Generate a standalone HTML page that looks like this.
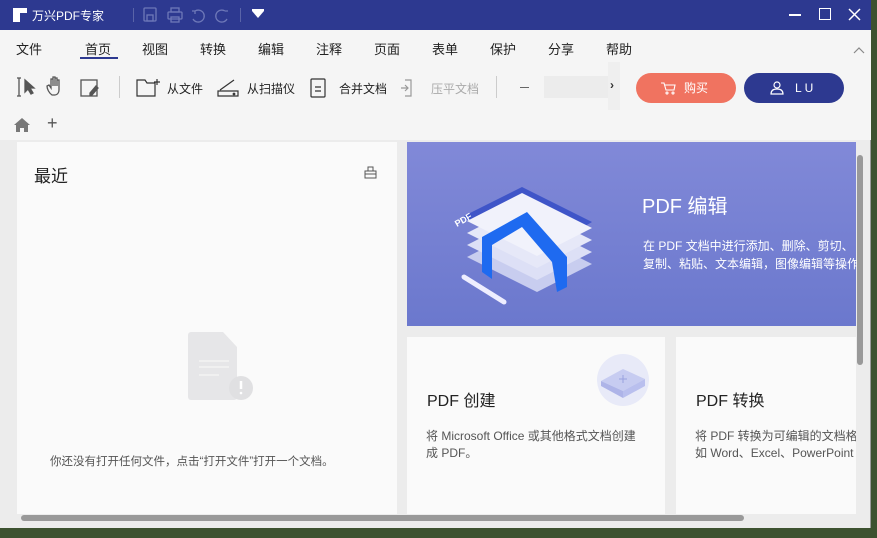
<!DOCTYPE html>
<html><head><meta charset="utf-8"><style>
*{margin:0;padding:0;box-sizing:border-box}
body{width:877px;height:538px;overflow:hidden;background:#3d5230;font-family:"Liberation Sans","Noto Sans CJK SC",sans-serif;position:relative}
.win{position:absolute;left:0;top:0;width:871px;height:528px;background:#ececec;border-right:1px solid #999}
.title{position:absolute;left:0;top:0;width:871px;height:30px;background:#2d3990;color:#fff}
.menu{position:absolute;top:30px;left:0;width:871px;height:32px;background:#f5f5f5}
.menu span{position:absolute;top:9px;font-size:13px;color:#222}
.tb{position:absolute;top:62px;left:0;width:871px;height:48px;background:#f5f5f5}
.tb .t{position:absolute;top:18px;font-size:12px;color:#222}
.tabs{position:absolute;top:110px;left:0;width:871px;height:30px;background:#f5f5f5}
.card{position:absolute;background:#fafafa}
.abs{position:absolute}
</style></head><body>
<div class="win">
<div class="title">
 <div class="abs" style="left:13px;top:8px;width:14px;height:5px;background:#fff"></div>
 <div class="abs" style="left:13px;top:13px;width:7px;height:9px;background:#fff"></div>
 <div class="abs" style="left:32px;top:7px;font-size:12px">万兴PDF专家</div>
 <div class="abs" style="left:133px;top:8px;width:1px;height:14px;background:#5a64a8"></div>
 <svg class="abs" style="left:142px;top:6px" width="100" height="18" fill="none" stroke="#6e78b8" stroke-width="1.3">
  <rect x="2" y="2" width="12" height="13" rx="1"/><rect x="5" y="9" width="6" height="6"/>
  <rect x="26" y="6" width="14" height="7" rx="1"/><rect x="29" y="2" width="8" height="4"/><rect x="29" y="11" width="8" height="5"/>
  <path d="M53 5a6 6 0 1 1 -2 8M53 5l-3 0M53 5l0 3"/>
  <path d="M83 5a6 6 0 1 0 2 8M83 5l3 0"/>
 </svg>
 <div class="abs" style="left:240px;top:8px;width:1px;height:14px;background:#5a64a8"></div>
 <div class="abs" style="left:252px;top:11px;width:0;height:0;border-left:6px solid transparent;border-right:6px solid transparent;border-top:7px solid #fff"></div>
 <div class="abs" style="left:252px;top:9px;width:12px;height:1.5px;background:#fff"></div>
 <div class="abs" style="left:789px;top:14px;width:12px;height:1.5px;background:#fff"></div>
 <div class="abs" style="left:819px;top:8px;width:12px;height:12px;border:1.5px solid #fff"></div>
 <svg class="abs" style="left:848px;top:8px" width="13" height="13" stroke="#fff" stroke-width="1.5"><path d="M1 1L12 12M12 1L1 12"/></svg>
</div>
<div class="menu">
 <span style="left:16px">文件</span><span style="left:85px">首页</span><span style="left:142px">视图</span><span style="left:200px">转换</span><span style="left:258px">编辑</span><span style="left:316px">注释</span><span style="left:374px">页面</span><span style="left:432px">表单</span><span style="left:490px">保护</span><span style="left:548px">分享</span><span style="left:606px">帮助</span>
 <div class="abs" style="left:80px;top:27px;width:38px;height:2px;background:#2d3990"></div>
 <svg class="abs" style="left:853px;top:17px" width="12" height="8" fill="none" stroke="#888" stroke-width="1.2"><path d="M1 6L6 1L11 6"/></svg>
</div>
<div class="tb">
 <svg class="abs" style="left:15px;top:13px" width="110" height="24" fill="none" stroke="#555" stroke-width="1.3">
  <path d="M2 3h4M4 3v18M2 21h4"/><path d="M10 5l0 12 3-3 3 5 2-1-3-5h4z" fill="#555"/>
  <path d="M37 20c-3-2-5-6-5-9l2-1 2 3V4l2 0v7V2h2v9V3h2v8V5h2v10c0 3-2 5-4 5z"/>
  <rect x="66" y="5" width="16" height="16"/><path d="M75 18l6-7 2 2-6 7h-2z" fill="#555"/>
 </svg>
 <div class="abs" style="left:119px;top:14px;width:1px;height:22px;background:#ccc"></div>
 <svg class="abs" style="left:135px;top:14px" width="330" height="24" fill="none" stroke="#333" stroke-width="1.2">
  <path d="M2 4h8l2 3h8v13H2z"/><path d="M22 3v6M19 6h6"/>
  <path d="M83 20h20v-5H83zM85 14l14-10" /><circle cx="99" cy="18" r="0.8"/>
  <rect x="176" y="3" width="14" height="18" rx="1"/><path d="M180 11h6M180 15h6"/>
  <path d="M270 4h6v16h-6" stroke="#999"/><path d="M266 12h7M270 9l3 3-3 3" stroke="#999"/>
 </svg>
 <span class="t" style="left:167px">从文件</span><span class="t" style="left:247px">从扫描仪</span><span class="t" style="left:339px">合并文档</span><span class="t" style="left:431px;color:#aaa">压平文档</span>
 <div class="abs" style="left:496px;top:14px;width:1px;height:22px;background:#ccc"></div>
 <div class="abs" style="left:520px;top:25px;width:9px;height:1px;background:#666"></div>
 <div class="abs" style="left:544px;top:14px;width:65px;height:22px;background:#ececec"></div>
 <div class="abs" style="left:608px;top:0;width:12px;height:48px;background:#efefef"></div>
 <div class="abs" style="left:610px;top:16px;font-size:12px;color:#333;font-weight:bold">›</div>
 <div class="abs" style="left:636px;top:11px;width:100px;height:30px;border-radius:15px;background:#f07360;color:#fff;font-size:12px;line-height:30px;padding-left:48px">购买</div>
 <svg class="abs" style="left:660px;top:19px" width="16" height="14" fill="none" stroke="#fff" stroke-width="1.1"><path d="M1 2h3l2 7h8l1-5H5"/><circle cx="7" cy="12" r="1"/><circle cx="13" cy="12" r="1"/></svg>
 <div class="abs" style="left:744px;top:11px;width:100px;height:30px;border-radius:15px;background:#2d3990;color:#fff;font-size:12px;line-height:30px;padding-left:51px;letter-spacing:3px">LU</div>
 <svg class="abs" style="left:770px;top:18px" width="14" height="15" fill="none" stroke="#fff" stroke-width="1.2"><circle cx="7" cy="5" r="3"/><path d="M1 14c0-4 3-5 6-5s6 1 6 5z"/></svg>
</div>
<div class="tabs">
 <svg class="abs" style="left:13px;top:7px" width="18" height="16" fill="#777"><path d="M9 1L1 8h2v7h4v-4h4v4h4V8h2z"/></svg>
 <div class="abs" style="left:47px;top:3px;font-size:18px;color:#555">+</div>
</div>
<div class="card" style="left:17px;top:142px;width:380px;height:372px">
 <div class="abs" style="left:17px;top:20px;font-size:17px;color:#222">最近</div>
 <svg class="abs" style="left:347px;top:24px" width="14" height="13" fill="none" stroke="#555" stroke-width="1"><rect x="1" y="5" width="11" height="7"/><rect x="4" y="1" width="5" height="4"/><path d="M1 8h11"/></svg>
 <svg class="abs" style="left:170px;top:190px" width="70" height="70"><path d="M4 0h32l14 15v50a3 3 0 0 1-3 3H4a3 3 0 0 1-3-3V3a3 3 0 0 1 3-3z" fill="#e6e6e8"/><path d="M12 29h30M12 35h30M12 43h20" stroke="#f3f3f3" stroke-width="1.5"/><circle cx="54" cy="56" r="12" fill="#e0e0e2"/><path d="M54 49v8" stroke="#fff" stroke-width="2.5"/><circle cx="54" cy="61" r="1.3" fill="#fff"/></svg>
 <div class="abs" style="left:33px;top:311px;font-size:11.5px;color:#555">你还没有打开任何文件，点击“打开文件”打开一个文档。</div>
</div>
<div class="abs" style="left:407px;top:142px;width:449px;height:184px;background:linear-gradient(180deg,#8189d8,#6b78cd)">
 <svg class="abs" style="left:35px;top:25px" width="180" height="140">
  <path d="M20 50L80 20 150 55 90 90z" fill="#3f55c8"/>
  <path d="M25 90L80 62 150 97 95 125z" fill="#c8cdef"/>
  <path d="M25 78L80 50 150 85 95 113z" fill="#dde0f6"/>
  <path d="M25 66L80 38 150 73 95 101z" fill="#e6e8f8"/>
  <path d="M25 54L80 26 150 61 95 89z" fill="#f1f2fb"/>
  <path d="M40 70L85 45 125 90 125 120 115 125 110 95 80 60 50 78 50 112 40 105z" fill="#1e6af0"/>
  <text x="15" y="60" font-size="9" fill="#fff" font-weight="bold" transform="rotate(-30 15 60)">PDF</text>
  <path d="M22 110L62 135" stroke="#eef" stroke-width="5" stroke-linecap="round"/>
 </svg>
 <div class="abs" style="left:235px;top:48px;font-size:20px;color:#fff">PDF 编辑</div>
 <div class="abs" style="left:236px;top:95px;font-size:12px;color:#fff;line-height:18px;white-space:nowrap">在 PDF 文档中进行添加、删除、剪切、<br>复制、粘贴、文本编辑，图像编辑等操作</div>
</div>
<div class="card" style="left:407px;top:337px;width:258px;height:177px">
 <svg class="abs" style="left:189px;top:16px" width="54" height="54"><circle cx="27" cy="27" r="26" fill="#e8eaf8"/><path d="M5 28l22-12 22 10-22 12z" fill="#c7ccf1"/><path d="M5 28v5l22 12v-7z" fill="#aeb4e8"/><path d="M27 38v7l22-12v-7z" fill="#b9bfee"/><path d="M27 22v8M23 26h8" stroke="#9aa2e0"/></svg>
 <div class="abs" style="left:20px;top:50px;font-size:16px;color:#222">PDF 创建</div>
 <div class="abs" style="left:19px;top:91px;font-size:12px;color:#555;line-height:17px;white-space:nowrap">将 Microsoft Office 或其他格式文档创建<br>成 PDF。</div>
</div>
<div class="card" style="left:676px;top:337px;width:180px;height:177px;overflow:hidden">
 <div class="abs" style="left:20px;top:50px;font-size:16px;color:#222">PDF 转换</div>
 <div class="abs" style="left:19px;top:91px;font-size:12px;color:#555;line-height:17px;white-space:nowrap">将 PDF 转换为可编辑的文档格式<br>如 Word、Excel、PowerPoint</div>
</div>
<div class="abs" style="left:857px;top:155px;width:6px;height:210px;background:#999;border-radius:3px"></div>
<div class="abs" style="left:21px;top:515px;width:723px;height:6px;background:#999;border-radius:3px"></div>
</div>
</body></html>
